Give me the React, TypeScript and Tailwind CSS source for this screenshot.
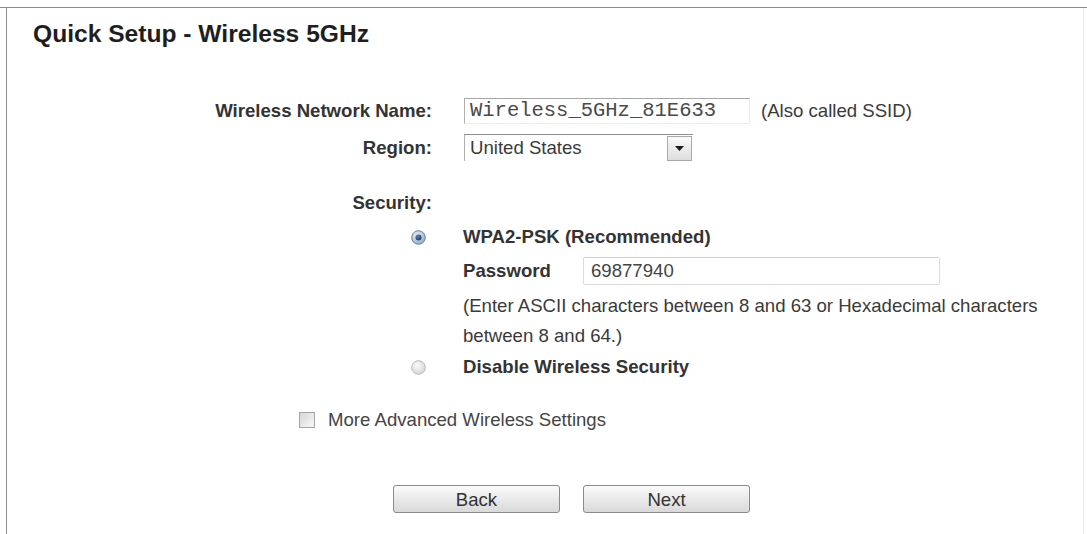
import React from "react";

const sans = { fontFamily: '"Liberation Sans", Arial, sans-serif' };
const mono = { fontFamily: '"Liberation Mono", "Courier New", monospace' };

function Radio({ checked }: { checked: boolean }) {
  return (
    <svg width="15" height="15" viewBox="0 0 15 15" className="block">
      <defs>
        <radialGradient id="rOn" cx="40%" cy="35%" r="70%">
          <stop offset="0%" stopColor="#eef4fa" />
          <stop offset="100%" stopColor="#8fa9c4" />
        </radialGradient>
        <radialGradient id="rOff" cx="40%" cy="35%" r="70%">
          <stop offset="0%" stopColor="#fbfbfb" />
          <stop offset="100%" stopColor="#d4d4d4" />
        </radialGradient>
        <radialGradient id="dot" cx="40%" cy="35%" r="70%">
          <stop offset="0%" stopColor="#5d86b3" />
          <stop offset="100%" stopColor="#1c3656" />
        </radialGradient>
      </defs>
      {checked ? (
        <>
          <circle cx="7.5" cy="7.5" r="6.8" fill="url(#rOn)" stroke="#6a829e" strokeWidth="1" />
          <circle cx="7.5" cy="7.5" r="3" fill="url(#dot)" />
        </>
      ) : (
        <circle cx="7.5" cy="7.5" r="6.8" fill="url(#rOff)" stroke="#b9b9b9" strokeWidth="1" />
      )}
    </svg>
  );
}

export default function App() {
  return (
    <div className="h-[534px] w-full bg-white pt-[7px] overflow-hidden" style={sans}>
      <div className="h-[527px] border-t border-[#8c8c8c] pl-[6px]">
        <div className="h-full border-l border-[#8c8c8c] border-r border-r-[#e8e8e8] mr-[3px] pt-[11px]">
          <h1 className="pl-[26px] text-[24.6px] leading-[30px] font-bold text-[#1e1e1e]">
            Quick Setup - Wireless 5GHz
          </h1>

          <div className="grid grid-cols-[425px_1fr] gap-x-[31px] text-[18.6px] text-[#3a3a3a] mt-[49px]">
            {/* network name */}
            <div className="h-[26px] flex items-center justify-end font-bold text-[#333]">
              Wireless Network Name:
            </div>
            <div className="h-[26px] flex items-center">
              <div className="ml-px h-[26px] w-[286px] border-t border-l border-t-[#a6a6a6] border-l-[#b0b0b0] border-r border-b border-r-[#ececec] border-b-[#ececec] flex items-center pl-[5px]">
                <span className="text-[20.5px] text-[#4a4a4a]" style={mono}>
                  Wireless_5GHz_81E633
                </span>
              </div>
              <span className="ml-[11px]">(Also called SSID)</span>
            </div>

            {/* region */}
            <div className="mt-[10px] h-[27px] flex items-center justify-end font-bold text-[#333]">
              Region:
            </div>
            <div className="mt-[10px] h-[27px] flex items-center">
              <div className="ml-px h-[27px] w-[229px] border-t border-l border-t-[#8e8e8e] border-l-[#b0b0b0] flex items-center justify-between pl-[5px] pr-[1px]">
                <span>United States</span>
                <div className="h-[25px] w-[25px] border border-[#a9a9a9] bg-gradient-to-b from-[#fafafa] to-[#dedede] flex items-center justify-center">
                  <svg width="9" height="5" viewBox="0 0 9 5">
                    <path d="M0 0h9L4.5 5z" fill="#1a1a1a" />
                  </svg>
                </div>
              </div>
            </div>

            {/* security */}
            <div className="mt-[29px] h-[26px] flex items-center justify-end font-bold text-[#333]">
              Security:
            </div>
            <div className="mt-[29px] h-[26px]" />

            <div className="mt-[8px] h-[26px] flex items-center justify-end pr-[6px]">
              <Radio checked />
            </div>
            <div className="mt-[8px] h-[26px] flex items-center font-bold text-[#333]">
              WPA2-PSK (Recommended)
            </div>

            <div className="mt-[7px] h-[28px]" />
            <div className="mt-[7px] h-[28px] flex items-center">
              <span className="w-[120px] font-bold text-[#333]">Password</span>
              <div className="h-[28px] w-[357px] border border-[#dcdcdc] border-t-[#cfcfcf] rounded-[2px] flex items-center pl-[7px] text-[#444]">
                69877940
              </div>
            </div>

            <div className="mt-[6px]" />
            <p className="mt-[6px] w-[600px] leading-[30px]">
              (Enter ASCII characters between 8 and 63 or Hexadecimal characters between 8 and 64.)
            </p>

            <div className="mt-[3px] h-[26px] flex items-center justify-end pr-[6px]">
              <Radio checked={false} />
            </div>
            <div className="mt-[3px] h-[26px] flex items-center font-bold text-[#333]">
              Disable Wireless Security
            </div>
          </div>

          {/* advanced settings */}
          <div className="mt-[27px] h-[26px] pl-[292px] flex items-center gap-[13px] text-[18.6px] text-[#444]">
            <span className="block h-[16px] w-[16px] border border-[#a4a4a4] bg-gradient-to-br from-[#d6d6d6] to-[#f9f9f9]" />
            <span>More Advanced Wireless Settings</span>
          </div>

          {/* navigation */}
          <div className="mt-[52px] pl-[386px] flex gap-[23px]">
            <button className="h-[28px] w-[167px] rounded-[3px] border border-[#8a8a8a] bg-gradient-to-b from-[#fbfbfb] to-[#d9d9d9] text-[18.6px] text-[#333]">
              Back
            </button>
            <button className="h-[28px] w-[167px] rounded-[3px] border border-[#8a8a8a] bg-gradient-to-b from-[#fbfbfb] to-[#d9d9d9] text-[18.6px] text-[#333]">
              Next
            </button>
          </div>
        </div>
      </div>
    </div>
  );
}
